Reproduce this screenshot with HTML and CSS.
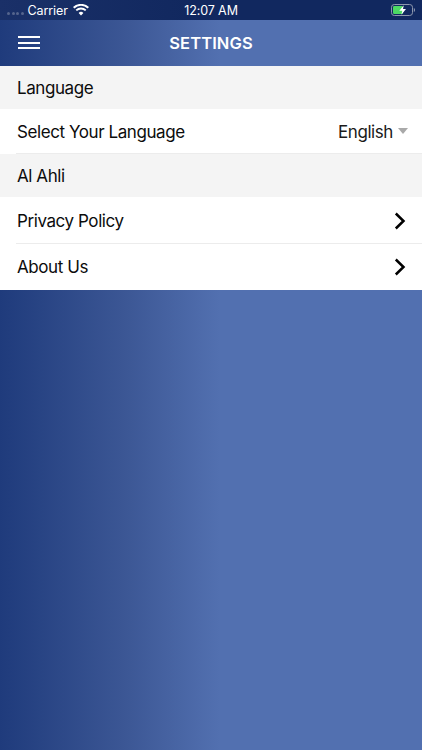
FILE: index.html
```html
<!DOCTYPE html>
<html lang="en">
<head>
<meta charset="utf-8">
<title>Settings</title>
<link rel="stylesheet" href="styles.css">
</head>
<body>
<div class="app">
  <div class="status">
    <div class="status-left">
      <span class="dots"><i></i><i></i><i></i><i></i></span>
      <span class="carrier">Carrier</span>
      <svg class="wifi" viewBox="0 0 16 12" width="16" height="12"><path d="M8 11.600 5.600 8.900a3.400 3.400 0 0 1 4.800 0z" fill="#fff"/><path d="M3.900 7.100a5.900 5.900 0 0 1 8.200 0l1.300-1.400a7.900 7.900 0 0 0-10.800 0z" fill="#fff"/><path d="M1.400 4.500a9.500 9.500 0 0 1 13.200 0L16 3.100A11.500 11.500 0 0 0 0 3.100z" fill="#fff"/></svg>
    </div>
    <span class="time">12:07 AM</span>
    <svg class="battery" viewBox="0 0 24 12" width="24" height="12"><rect x=".5" y=".5" width="21" height="11" rx="2.800" fill="none" stroke="#8d97ad"/><rect x="2" y="2" width="10" height="8" rx="1.200" fill="#4cd964"/><path d="M22.800 4v4c.8-.3 1.200-1 1.200-2s-.4-1.700-1.200-2z" fill="#8d97ad"/><path d="M12.800 1.200 8.300 6.800h3l-.9 4 4.600-5.800h-3z" fill="#fff"/></svg>
  </div>
  <header class="nav">
    <button class="menu" aria-label="Menu"><span></span><span></span><span></span></button>
    <h1 class="title">SETTINGS</h1>
  </header>
  <main class="list">
    <div class="section">Language</div>
    <div class="row row-lang">
      <span>Select Your Language</span>
      <span class="value">English<svg class="caret" viewBox="0 0 10 6" width="10" height="6"><path d="M0 0h10L5 6z" fill="#a9a9a9"/></svg></span>
    </div>
    <div class="section">Al Ahli</div>
    <div class="row row-link">
      <span>Privacy Policy</span>
      <svg class="chev" viewBox="0 0 12 18" width="12" height="18"><path d="M1.800 1.500 9.500 9l-7.700 7.500" fill="none" stroke="#000" stroke-width="2.500"/></svg>
    </div>
    <div class="row row-end">
      <span>About Us</span>
      <svg class="chev" viewBox="0 0 12 18" width="12" height="18"><path d="M1.800 1.500 9.500 9l-7.700 7.500" fill="none" stroke="#000" stroke-width="2.500"/></svg>
    </div>
  </main>
</div>
</body>
</html>
```
FILE: styles.css
```css
* { box-sizing: border-box; }
html, body { margin: 0; height: 100%; }
body { font-family: "Inter", "Liberation Sans", Arial, sans-serif; overflow: hidden; }
.app {
  width: 422px;
  height: 750px;
  background: linear-gradient(90deg, #1f3b7c 0%, #3c5795 30%, #5270b0 52%, #5270b0 100%);
  display: flex;
  flex-direction: column;
}
.status {
  height: 20px;
  background: linear-gradient(90deg, #1a3068 0%, #11285f 45%, #11285f 100%);
  color: #fff;
  position: relative;
  display: flex;
  align-items: center;
  justify-content: space-between;
  padding: 0 7px 0 7px;
  font-family: "Inter", "Liberation Sans", Arial, sans-serif;
  font-size: 12.500px;
}
.status-left { display: flex; align-items: center; }
.dots { display: flex; gap: 1.500px; margin-top: 6px; margin-right: 4px; }
.dots i { width: 3px; height: 3px; border-radius: 50%; background: #55658d; }
.carrier { letter-spacing: -.1px; }
.wifi { margin-left: 5px; }
.time { position: absolute; left: 0; right: 0; text-align: center; letter-spacing: -.1px; }
.nav {
  height: 45px;
  position: relative;
  display: flex;
  align-items: center;
  justify-content: center;
}
.menu {
  position: absolute;
  left: 18px;
  top: 16px;
  width: 22px;
  height: 13px;
  padding: 0;
  border: 0;
  background: none;
  display: flex;
  flex-direction: column;
  justify-content: space-between;
}
.menu span { display: block; height: 2px; background: #fff; }
.title {
  margin: 0;
  color: #fff;
  font-family: "Inter", "Liberation Sans", Arial, sans-serif;
  font-size: 16.500px;
  font-weight: 600;
  letter-spacing: .1px;
}
.list { margin-top: 1px; font-size: 17px; color: #0c0c0c; letter-spacing: -.42px; }
.section {
  height: 43px;
  background: #f4f4f4;
  display: flex;
  align-items: center;
  padding-left: 17px;
}
.row {
  background: #fff;
  display: flex;
  align-items: center;
  justify-content: space-between;
  padding: 0 16px 0 17px;
  position: relative;
}
.row-lang { height: 45px; padding-right: 14px; }
.row-link { height: 47px; }
.row-lang::after, .row-link::after { content: ""; position: absolute; left: 16px; right: 0; bottom: 0; height: 1px; background: #ececec; }
.row-end { height: 46px; }
.value { display: flex; align-items: center; gap: 5px; color: #1a1a1a; }
.caret { margin-top: -1px; }
.chev { display: block; }
```
